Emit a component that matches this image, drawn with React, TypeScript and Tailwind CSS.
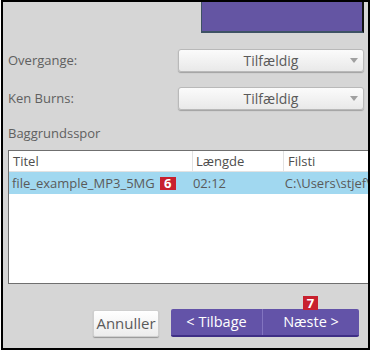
import React from 'react';

const font = { fontFamily: '"Open Sans", "Noto Sans", sans-serif' };

const Dropdown = ({ value }: { value: string }) => (
  <div className="relative flex h-[23px] w-[186px] items-center justify-center rounded-[3px] border border-[#b9b9b9] bg-gradient-to-b from-[#fbfbfb] to-[#e9e9e9] shadow-[0_1px_1px_rgba(0,0,0,0.25)]">
    <span className="text-[14px] leading-none text-[#5a5a5a]">{value}</span>
    <span className="absolute right-[5px] top-[8px] h-0 w-0 border-x-[4px] border-t-[5px] border-x-transparent border-t-[#a0a0a0]" />
  </div>
);

const SettingRow = ({ label, value }: { label: string; value: string }) => (
  <div className="flex items-center">
    <span className="w-[170px] text-[13px] leading-none text-[#606060]">{label}</span>
    <Dropdown value={value} />
  </div>
);

const Badge = ({ n, className }: { n: string; className?: string }) => (
  <span
    className={`flex items-center justify-center bg-[#c8202e] text-[13px] font-bold leading-none text-white ${className ?? ''}`}
  >
    {n}
  </span>
);

export default function App() {
  return (
    <div className="h-[350px] w-[370px] bg-white pl-[1px]" style={font}>
      <div className="flex h-[350px] w-[369px] flex-col overflow-hidden border-2 border-black bg-[#d6d6d6]">
        {/* preview strip */}
        <div className="ml-[198px] h-[31px] w-[163px] border-b-2 border-l border-r-2 border-b-[#3e5264] border-l-[#3e5264] border-r-[#111] bg-[#6455a3]" />

        <div className="flex flex-col pl-[5px]">
          <div className="mt-[16px]">
            <SettingRow label="Overgange:" value="Tilfældig" />
          </div>
          <div className="mt-[15px]">
            <SettingRow label="Ken Burns:" value="Tilfældig" />
          </div>

          <div className="mt-[17px] text-[13px] leading-none text-[#606060]">Baggrundsspor</div>

          {/* track table */}
          <div className="mt-[10px] flex h-[134px] w-[364px] flex-col border border-[#6f6f6f] bg-white text-[13px] leading-none">
            <div className="flex h-[21px] items-center border-b border-[#e2e2e2] text-[#4e4e4e]">
              <div className="flex h-full w-[184px] items-center border-r border-[#e2e2e2] pl-[4px]">Titel</div>
              <div className="flex h-full w-[91px] items-center border-r border-[#e2e2e2] pl-[3px]">Længde</div>
              <div className="flex h-full flex-1 items-center pl-[4px]">Filsti</div>
            </div>
            <div className="flex h-[22px] items-center bg-[#a1d8f0] text-[#5a5a5a]">
              <div className="flex w-[184px] items-center pl-[3px]">
                file_example_MP3_5MG
                <Badge n="6" className="ml-[5px] h-[13px] w-[16px]" />
              </div>
              <div className="w-[92px]">02:12</div>
              <div className="flex-1 whitespace-nowrap">C:\Users\stjef\</div>
            </div>
          </div>
        </div>

        {/* buttons */}
        <div className="mt-[25px] flex items-end pl-[90px]">
          <button className="flex h-[27px] w-[66px] items-center justify-center rounded-[2px] border border-[#cfcfcf] bg-gradient-to-b from-white to-[#ececec] text-[15px] leading-none text-[#5a5a5a] shadow-[0_1px_1px_rgba(0,0,0,0.3)]">
            Annuller
          </button>
          <div className="ml-[12px] flex h-[28px] rounded-[2px] border-b-2 border-[#3f2f86] bg-[#6353a8] text-[14.5px] leading-none text-white">
            <div className="flex w-[92px] items-center justify-center border-r border-[#8274c0]">&lt; Tilbage</div>
            <div className="relative flex w-[96px] items-center justify-center">
              Næste &gt;
              <Badge n="7" className="absolute left-[40px] top-[-13px] h-[14px] w-[15px]" />
            </div>
          </div>
        </div>
      </div>
    </div>
  );
}
